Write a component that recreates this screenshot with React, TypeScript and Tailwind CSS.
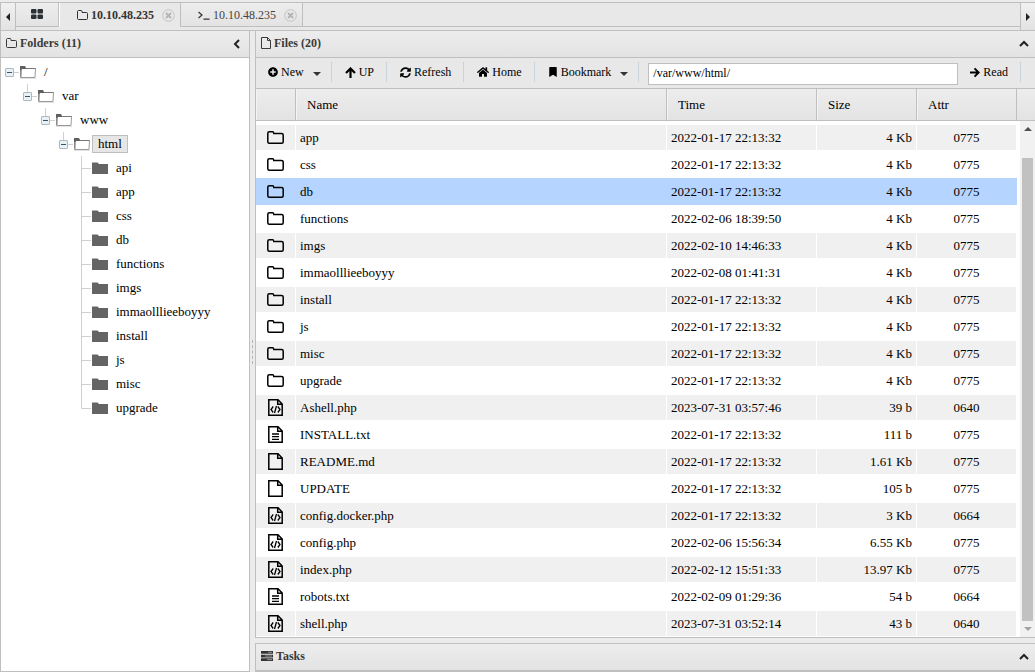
import type { ReactNode } from "react";
import { FaBookmark, FaHome, FaPlusCircle, FaSyncAlt } from "react-icons/fa";

type FileKind = "dir" | "code" | "text" | "file";

type FileRow = {
  name: string;
  time: string;
  size: string;
  attr: string;
  kind: FileKind;
};

type TreeNode = {
  name: string;
  children?: TreeNode[];
};

const files: FileRow[] = [
  { name: "app", time: "2022-01-17 22:13:32", size: "4 Kb", attr: "0775", kind: "dir" },
  { name: "css", time: "2022-01-17 22:13:32", size: "4 Kb", attr: "0775", kind: "dir" },
  { name: "db", time: "2022-01-17 22:13:32", size: "4 Kb", attr: "0775", kind: "dir" },
  { name: "functions", time: "2022-02-06 18:39:50", size: "4 Kb", attr: "0775", kind: "dir" },
  { name: "imgs", time: "2022-02-10 14:46:33", size: "4 Kb", attr: "0775", kind: "dir" },
  { name: "immaolllieeboyyy", time: "2022-02-08 01:41:31", size: "4 Kb", attr: "0775", kind: "dir" },
  { name: "install", time: "2022-01-17 22:13:32", size: "4 Kb", attr: "0775", kind: "dir" },
  { name: "js", time: "2022-01-17 22:13:32", size: "4 Kb", attr: "0775", kind: "dir" },
  { name: "misc", time: "2022-01-17 22:13:32", size: "4 Kb", attr: "0775", kind: "dir" },
  { name: "upgrade", time: "2022-01-17 22:13:32", size: "4 Kb", attr: "0775", kind: "dir" },
  { name: "Ashell.php", time: "2023-07-31 03:57:46", size: "39 b", attr: "0640", kind: "code" },
  { name: "INSTALL.txt", time: "2022-01-17 22:13:32", size: "111 b", attr: "0775", kind: "text" },
  { name: "README.md", time: "2022-01-17 22:13:32", size: "1.61 Kb", attr: "0775", kind: "file" },
  { name: "UPDATE", time: "2022-01-17 22:13:32", size: "105 b", attr: "0775", kind: "file" },
  { name: "config.docker.php", time: "2022-01-17 22:13:32", size: "3 Kb", attr: "0664", kind: "code" },
  { name: "config.php", time: "2022-02-06 15:56:34", size: "6.55 Kb", attr: "0775", kind: "code" },
  { name: "index.php", time: "2022-02-12 15:51:33", size: "13.97 Kb", attr: "0775", kind: "code" },
  { name: "robots.txt", time: "2022-02-09 01:29:36", size: "54 b", attr: "0664", kind: "text" },
  { name: "shell.php", time: "2023-07-31 03:52:14", size: "43 b", attr: "0640", kind: "code" },
];

const leaves = ["api", "app", "css", "db", "functions", "imgs", "immaolllieeboyyy", "install", "js", "misc", "upgrade"];

const tree: TreeNode = {
  name: "/",
  children: [
    {
      name: "var",
      children: [
        {
          name: "www",
          children: [{ name: "html", children: leaves.map((name) => ({ name })) }],
        },
      ],
    },
  ],
};

function SmallFolder() {
  return (
    <svg width="11" height="12" viewBox="0 0 11 12" fill="none" stroke="currentColor" aria-hidden>
      <path d="M.5 9.500v-7q0-1 1-1h2.500q1 0 1 1v1h4.500q1 0 1 1v5q0 1-1 1h-8q-1 0-1-1z" />
    </svg>
  );
}

function SmallFile() {
  return (
    <svg width="10" height="12" viewBox="0 0 10 12" fill="none" stroke="currentColor" aria-hidden>
      <path d="M.5.5h6l3 3v8h-9zM6.500.5v3h3" />
    </svg>
  );
}

function KindIcon({ kind }: { kind: FileKind }) {
  if (kind === "dir") {
    return (
      <svg className="mx-auto block" width="17" height="13" viewBox="0 0 17 13" fill="none" stroke="#000" strokeWidth="1.500" aria-hidden>
        <path d="M.8 10.700v-8.400q0-1.500 1.500-1.500h3.200q1.200 0 1.300 1.700h7.700q1.700 0 1.700 1.500v6.700q0 1.500-1.500 1.500H2.300q-1.500 0-1.500-1.500z" />
      </svg>
    );
  }
  return (
    <svg className="mx-auto block" width="15" height="17" viewBox="0 0 15 17" fill="none" stroke="#000" strokeWidth="1.500" aria-hidden>
      <path d="M.8.8h9.200l4.200 4.200v11.200H.8zM9.700.8v4.500h4.500" />
      {kind === "code" && <path d="M5.200 7.500L3 10.500l2.200 3M9.800 7.500l2.200 3-2.200 3M8.500 7l-2 7" strokeWidth="1.300" />}
      {kind === "text" && <path d="M4 8h7M4 10.700h7M4 13.400h7" strokeWidth="1.300" />}
    </svg>
  );
}

function Chevron({ dir }: { dir: "left" | "up" }) {
  return (
    <svg width="10" height="10" viewBox="0 0 10 10" fill="none" stroke="#222" strokeWidth="2" aria-hidden>
      <path d={dir === "left" ? "M7 1L3 5l4 4" : "M1 7l4-4 4 4"} />
    </svg>
  );
}

function Arrow({ dir }: { dir: "up" | "right" }) {
  return (
    <svg width={dir === "up" ? 11 : 10} height="11" viewBox="0 0 11 11" fill="none" stroke="#000" strokeWidth="2.200" aria-hidden>
      <path d={dir === "up" ? "M1 6l4.500-4.500L10 6M5.500 2v9" : "M5 1l4.500 4.500L5 10M9 5.500H0"} />
    </svg>
  );
}

function Caret() {
  return (
    <svg className="mt-[3px] ml-1.5" width="8" height="4" viewBox="0 0 8 4" fill="#333" aria-hidden>
      <path d="M0 0h8L4 4z" />
    </svg>
  );
}

function PanelHeader({ icon, title, dir }: { icon: ReactNode; title: string; dir: "left" | "up" }) {
  return (
    <header className="flex h-[27px] shrink-0 items-center gap-[3px] border-b border-[#bfbfbf] bg-linear-to-b from-[#ededed] to-[#e3e3e3] px-[5px] pb-0.5 text-xs font-bold text-[#3a3a3a]">
      {icon}
      <h2 className="flex-1">{title}</h2>
      <button type="button" aria-label={`Collapse ${title}`} className={dir === "left" ? "mt-0.5 mr-0.5" : "mt-px mr-px"}>
        <Chevron dir={dir} />
      </button>
    </header>
  );
}

function CloseIcon() {
  return (
    <button type="button" aria-label="Close tab">
      <svg width="13" height="13" viewBox="0 0 13 13" fill="none" stroke="#c2c2c2" aria-hidden>
        <circle cx="6.500" cy="6.500" r="5.800" />
        <path d="M4 4l5 5M9 4l-5 5" stroke="#b5b5b5" strokeWidth="2" />
      </svg>
    </button>
  );
}

function TabBar() {
  return (
    <nav className="mt-0.5 flex h-[29px] shrink-0 border-y border-l border-[#bfbfbf] bg-[#e8e8e8] text-xs text-[#444]">
      <button type="button" aria-label="Scroll tabs left" className="flex w-[15px] items-center justify-center border-r border-[#bfbfbf] bg-linear-to-b from-[#f0f0f0] to-[#e3e3e3]">
        <svg width="4" height="8" viewBox="0 0 4 8" fill="#222" aria-hidden>
          <path d="M4 0v8L0 4z" />
        </svg>
      </button>
      <button type="button" aria-label="Home" className="flex h-6 w-[43px] items-center justify-center border-r border-b border-[#bfbfbf] bg-linear-to-b from-[#ededed] to-[#e3e3e3] pb-px">
        <svg width="12" height="10" viewBox="0 0 12 10" fill="#2a3033" aria-hidden>
          <rect width="5.500" height="4.500" rx="1" />
          <rect x="6.500" width="5.500" height="4.500" rx="1" />
          <rect y="5.500" width="5.500" height="4.500" rx="1" />
          <rect x="6.500" y="5.500" width="5.500" height="4.500" rx="1" />
        </svg>
      </button>
      <div className="flex h-6 items-center border-l border-white pr-[5px] pl-[17px] text-[#333]">
        <SmallFolder />
        <button type="button" className="mr-2 ml-[3px] font-bold">10.10.48.235</button>
        <CloseIcon />
      </div>
      <div className="flex h-6 items-center border-x border-b border-[#bfbfbf] bg-linear-to-b from-[#ededed] to-[#e3e3e3] pt-px pr-[5px] pl-[17px]">
        <svg width="12" height="10" viewBox="0 0 12 10" fill="none" stroke="#333" strokeWidth="1.200" aria-hidden>
          <path d="M.5 2l3.500 3-3.500 3M5.500 9.200h6" />
        </svg>
        <button type="button" className="mr-2 ml-[3px]">10.10.48.235</button>
        <CloseIcon />
      </div>
      <div className="h-6 flex-1 border-b border-[#bfbfbf]" />
      <button type="button" aria-label="Scroll tabs right" className="flex w-[15px] items-center justify-center border-l border-[#bfbfbf] bg-linear-to-b from-[#f0f0f0] to-[#e3e3e3]">
        <svg width="4" height="8" viewBox="0 0 4 8" fill="#222" aria-hidden>
          <path d="M0 0v8l4-4z" />
        </svg>
      </button>
    </nav>
  );
}

function TreeItem({ node, root = false, last = true }: { node: TreeNode; root?: boolean; last?: boolean }) {
  const open = Boolean(node.children);

  return (
    <li>
      <div className="flex h-6 items-center">
        {open ? (
          <button type="button" aria-label={`Collapse ${node.name}`}>
            <svg className="block" width="18" height="24" viewBox="0 0 18 24" fill="none" stroke="#d0d0d0" aria-hidden>
              {!root && <path d="M8.500 0v8" />}
              <path d="M13 12.500h5" />
              <rect x="4.500" y="8.500" width="8" height="8" rx=".5" fill="#eaf1f4" stroke="#a9bac3" />
              <path d="M6 12.500h5" stroke="#34566b" />
            </svg>
          </button>
        ) : (
          <svg width="18" height="24" viewBox="0 0 18 24" stroke="#d0d0d0" fill="none" aria-hidden>
            <path d={last ? "M8.500 0v12.500h9.500" : "M8.500 0v24M8.500 12.500h9.500"} />
          </svg>
        )}
        {open ? (
          <svg className="ml-px" width="18" height="14" viewBox="0 0 18 14" fill="none" aria-hidden>
            <path d="M0 13.500h16" stroke="#e2e2e2" />
            <path d="M1.500 3.500h14l-.5 9H1z" fill="#fff" stroke="#9a9a9a" />
            <path d="M.5 2v10.500" stroke="#8a8a8a" />
            <path d="M5 3.500h10.500" stroke="#777" />
            <path d="M0 5V1h5l1 2v1H2L1 5z" fill="#606060" />
          </svg>
        ) : (
          <svg className="ml-px" width="18" height="14" viewBox="0 0 18 14" aria-hidden>
            <path d="M0 1.500h5.500l1.500 1.500h9v10h-16z" fill="#646464" />
          </svg>
        )}
        <button
          type="button"
          className={
            node.name === "html"
              ? "h-[18px] border border-[#bfbfbf] bg-[#e6e6e6] px-[5px] leading-4"
              : "h-[18px] border border-transparent px-[5px] leading-4"
          }
        >
          {node.name}
        </button>
      </div>
      {node.children && (
        <ul className="pl-[18px]">
          {node.children.map((child, i) => (
            <TreeItem key={child.name} node={child} last={i === node.children!.length - 1} />
          ))}
        </ul>
      )}
    </li>
  );
}

function ToolButton({ icon, label, menu = false }: { icon: ReactNode; label: string; menu?: boolean }) {
  return (
    <>
      <button type="button" className={menu ? "flex items-center gap-[3px] pr-2.5 pl-3" : "flex items-center gap-[3px] px-3"}>
        {icon}
        <span>{label}</span>
        {menu && <Caret />}
      </button>
      <span className="mr-px h-5 w-px bg-[#c5d5db]" />
    </>
  );
}

function Toolbar() {
  return (
    <div className="flex h-[31px] shrink-0 items-center border-b border-[#bfbfbf] bg-[#e8e8e8] pb-0.5 text-xs text-black">
      <ToolButton icon={<FaPlusCircle size={10} />} label="New" menu />
      <ToolButton icon={<Arrow dir="up" />} label="UP" />
      <ToolButton icon={<FaSyncAlt size={11} />} label="Refresh" />
      <ToolButton icon={<FaHome size={12} />} label="Home" />
      <ToolButton icon={<FaBookmark size={10} />} label="Bookmark" menu />
      <input
        aria-label="Path"
        defaultValue="/var/www/html/"
        className="mt-[3px] ml-2 h-[22px] min-w-0 flex-1 border border-[#bfbfbf] bg-white px-1 outline-none"
      />
      <ToolButton icon={<Arrow dir="right" />} label="Read" />
      <span className="w-[13px]" />
    </div>
  );
}

function Columns() {
  return (
    <colgroup>
      <col className="w-10" />
      <col />
      <col className="w-[150px]" />
      <col className="w-[100px]" />
      <col className="w-[100px]" />
    </colgroup>
  );
}

function cellStyle(index: number, selected: boolean) {
  if (selected) return "border-[#b5d4ff] bg-[#b5d4ff]";
  return index % 2 === 0 ? "border-white bg-[#f0f0f0]" : "border-white bg-white";
}

function FileGrid() {
  return (
    <>
      <div className="flex h-8 shrink-0 border-b border-[#bfbfbf] bg-linear-to-b from-[#ededed] to-[#e3e3e3]">
        <table className="h-[31px] min-w-0 flex-1 table-fixed border-separate border-spacing-0 text-left text-[13px]">
          <Columns />
          <thead>
            <tr>
              {["", "Name", "Time", "Size", "Attr"].map((title) => (
                <th key={title} className="border-r border-l border-r-[#bfbfbf] border-l-[#f4f4f4] px-2.5 font-normal">
                  {title}
                </th>
              ))}
            </tr>
          </thead>
        </table>
        <div className="w-[18px]" />
      </div>
      <div className="flex min-h-0 flex-1 bg-white">
        <div className="min-w-0 flex-1 overflow-hidden pt-[3px]">
          <table className="w-full table-fixed border-separate border-spacing-0 text-[13px] leading-[25px]">
            <Columns />
            <tbody>
              {files.map((file, i) => {
                const tone = cellStyle(i, file.name === "db");
                return (
                  <tr key={file.name}>
                    <td className={`border-y border-r ${tone}`}>
                      <KindIcon kind={file.kind} />
                    </td>
                    <td className={`border-y border-r pl-1 ${tone}`}>{file.name}</td>
                    <td className={`border-y border-r pl-1 ${tone}`}>{file.time}</td>
                    <td className={`border-y border-r pr-1 text-right ${tone}`}>{file.size}</td>
                    <td className={`border-y border-r text-center ${tone}`}>{file.attr}</td>
                  </tr>
                );
              })}
            </tbody>
          </table>
        </div>
        <div className="ml-[3px] flex w-[15px] flex-col items-center bg-[#f1f1f1]" aria-hidden>
          <svg className="my-1.5 shrink-0" width="8" height="4" viewBox="0 0 8 4" fill="#505050">
            <path d="M0 4h8L4 0z" />
          </svg>
          <div className="mt-[21px] w-[11px] flex-1 bg-[#c1c1c1]" />
          <svg className="my-1.5 shrink-0" width="8" height="4" viewBox="0 0 8 4" fill="#a3a3a3">
            <path d="M0 0h8L4 4z" />
          </svg>
        </div>
      </div>
    </>
  );
}

function TasksIcon() {
  return (
    <svg width="12" height="10" viewBox="0 0 12 10" fill="#333" aria-hidden>
      <path d="M0 0h12v2.700H0zM0 3.700h12v2.700H0zM0 7.300h12V10H0z" />
      <path d="M7 1.300h4M4 5h7M6 8.600h5" stroke="#aaa" strokeWidth=".8" />
    </svg>
  );
}

export default function App() {
  return (
    <div className="flex h-screen flex-col overflow-hidden bg-[#ebebeb] font-['Liberation_Serif',serif] text-black">
      <TabBar />
      <main className="flex min-h-0 flex-1">
        <aside className="flex w-[250px] shrink-0 flex-col border-x border-b border-[#bfbfbf] bg-white">
          <PanelHeader icon={<SmallFolder />} title="Folders (11)" dir="left" />
          <ul className="pt-0.5 text-[13px]">
            <TreeItem node={tree} root />
          </ul>
        </aside>
        <div className="flex w-[5px] shrink-0 items-center justify-center">
          <span className="h-6 border-l border-dashed border-[#b5b5b5]" />
        </div>
        <div className="flex min-w-0 flex-1 flex-col gap-[5px]">
          <section className="flex min-h-0 flex-1 flex-col border-b border-l border-[#bfbfbf]">
            <PanelHeader icon={<SmallFile />} title="Files (20)" dir="up" />
            <Toolbar />
            <FileGrid />
          </section>
          <section className="border-t border-b border-l border-[#bfbfbf]">
            <PanelHeader icon={<TasksIcon />} title="Tasks" dir="up" />
          </section>
        </div>
      </main>
    </div>
  );
}
